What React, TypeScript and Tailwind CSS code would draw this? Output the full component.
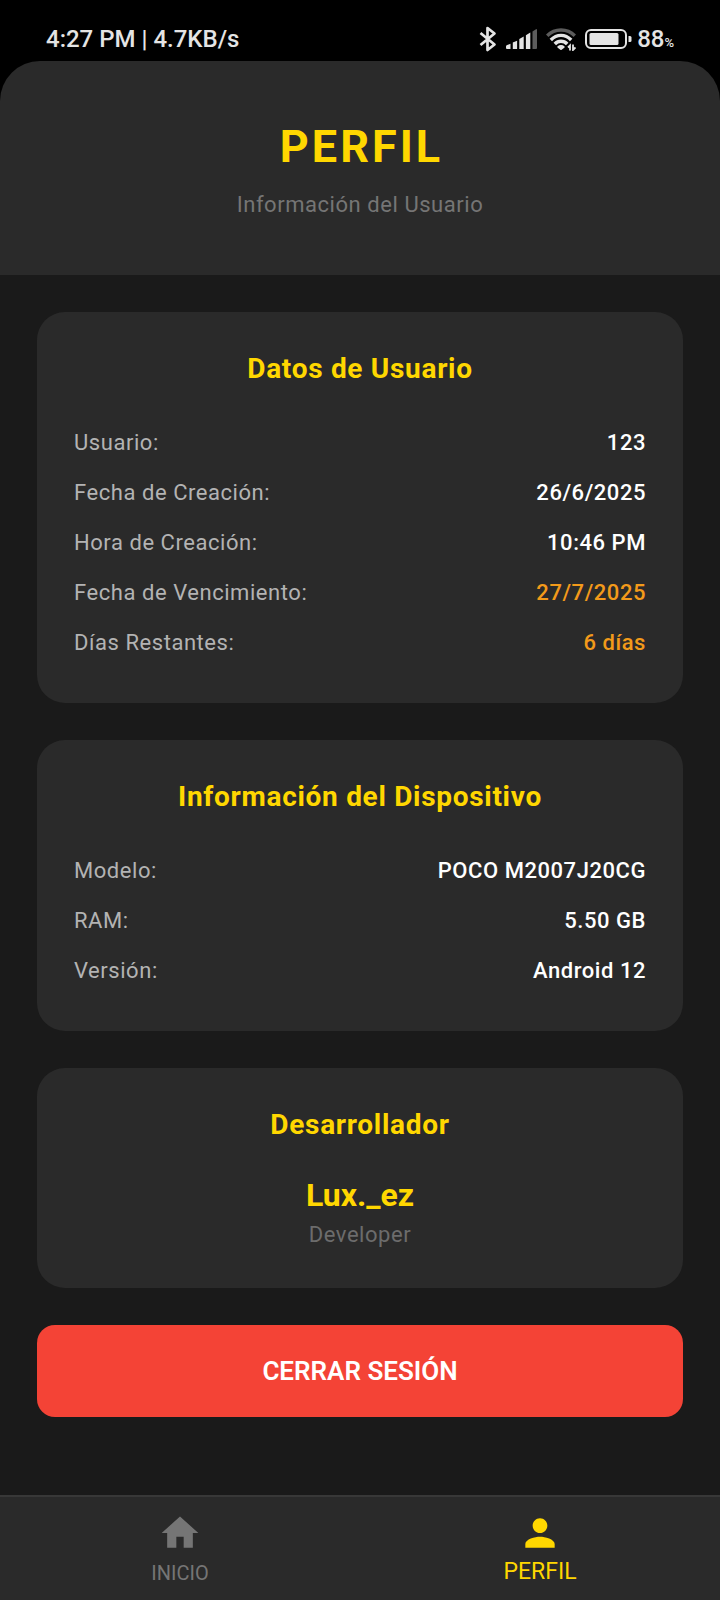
import type { ReactNode } from "react";

type Row = { label: string; value: string; warn?: boolean };

const userRows: Row[] = [
  { label: "Usuario:", value: "123" },
  { label: "Fecha de Creación:", value: "26/6/2025" },
  { label: "Hora de Creación:", value: "10:46 PM" },
  { label: "Fecha de Vencimiento:", value: "27/7/2025", warn: true },
  { label: "Días Restantes:", value: "6 días", warn: true },
];

const deviceRows: Row[] = [
  { label: "Modelo:", value: "POCO M2007J20CG" },
  { label: "RAM:", value: "5.50 GB" },
  { label: "Versión:", value: "Android 12" },
];

function StatusBar() {
  return (
    <div className="flex h-[61px] items-center justify-between bg-black pt-[17px] pr-[46px] pl-[46px] text-[24px] leading-[28px] font-medium text-[#e4e4e4]">
      <span>4:27 PM | 4.7KB/s</span>
      <div className="flex items-center gap-[9px]">
        <svg className="h-[26px] w-[18px]" viewBox="0 0 18 26" fill="none" stroke="#e4e4e4" strokeWidth="2.7" aria-hidden="true">
          <path d="M1.500 7 15.500 18.500 8.500 24V2l7 5.500L1.500 19" strokeLinejoin="round" />
        </svg>
        <svg className="h-[22px] w-[31px]" viewBox="0 0 31 22" fill="#e4e4e4" aria-hidden="true">
          <path d="M0 18.500q0-1.200 1.200-1.500l3.300-1.200V21H1q-1 0-1-1z" />
          <path d="M6.800 14.500l4.300-1.800V21H6.800z" />
          <path d="M13.300 11l4.400-2.600V21h-4.400z" />
          <path d="M19.900 7.200l4.400-2.600V21h-4.400z" />
          <path d="M26.500 3.500L30 1.200q1-.4 1 .8V20q0 1-1 1h-3.500z" fill="#5c5c5c" />
        </svg>
        <svg className="h-[24px] w-[30px]" viewBox="0 0 30 24" fill="none" strokeWidth="3.4" aria-hidden="true">
          <path d="M1.200 8.700C8.800 1 21.200 1 28.800 8.700" stroke="#5c5c5c" />
          <path d="M4.800 13C10.800 6.800 19.200 6.800 25.200 13" stroke="#e4e4e4" />
          <path d="M8.800 17C12.300 13.300 17.700 13.300 21.200 17" stroke="#e4e4e4" />
          <path d="M12.300 19.900C13.700 18.700 16.300 18.700 17.700 19.900L15 22z" fill="#e4e4e4" stroke="#e4e4e4" strokeWidth="2" strokeLinejoin="round" />
          <path d="M24 23.500V18.500L22 20.500M27 17.500V23L29.500 20.500" stroke="#e4e4e4" strokeWidth="1.800" />
        </svg>
        <div className="flex items-center gap-[5px]">
          <svg className="h-[20px] w-[47px]" viewBox="0 0 47 20" aria-hidden="true">
            <rect x="1" y="1" width="40" height="18" rx="5" fill="none" stroke="#e4e4e4" strokeWidth="2" />
            <rect x="4.500" y="4" width="29" height="12" rx="1.500" fill="#e4e4e4" />
            <path d="M43.500 7h1.500q1.500 0 1.500 1.500v3q0 1.500-1.500 1.500h-1.500z" fill="#e4e4e4" />
          </svg>
          <span>
            88<span className="text-[13px] leading-none">%</span>
          </span>
        </div>
      </div>
    </div>
  );
}

function Card({ title, children }: { title: string; children: ReactNode }) {
  return (
    <section className="rounded-[28px] bg-[#2a2a2a] px-[37px] pt-[38px] pb-[35px]">
      <h2 className="mb-[30px] text-center text-[28px] leading-[38px] font-bold tracking-wide text-[#ffd700]">{title}</h2>
      {children}
    </section>
  );
}

function Rows({ rows }: { rows: Row[] }) {
  return (
    <dl>
      {rows.map((row) => (
        <div key={row.label} className="flex h-[50px] items-center justify-between text-[22px] leading-[26px] tracking-wide">
          <dt className="text-[#b3b3b3]">{row.label}</dt>
          <dd className={row.warn ? "font-medium text-[#f39a1a]" : "font-medium text-white"}>{row.value}</dd>
        </div>
      ))}
    </dl>
  );
}

export default function App() {
  return (
    <div className="flex min-h-screen flex-col bg-[#1a1a1a] font-[Roboto,sans-serif]">
      <StatusBar />
      <div className="bg-black">
        <header className="rounded-t-[40px] bg-[#2a2a2a] pt-[58px] pb-[56px] text-center">
          <h1 className="pl-[3px] text-[45px] leading-[56px] font-bold tracking-[3px] text-[#ffd700]">PERFIL</h1>
          <p className="mt-4 text-[22px] leading-[28px] tracking-wide text-[#757575]">Información del Usuario</p>
        </header>
      </div>
      <main className="flex flex-1 flex-col gap-[37px] px-[37px] pt-[37px] pb-9">
        <Card title="Datos de Usuario">
          <Rows rows={userRows} />
        </Card>
        <Card title="Información del Dispositivo">
          <Rows rows={deviceRows} />
        </Card>
        <Card title="Desarrollador">
          <p className="text-center text-[32px] leading-[43px] font-bold text-[#ffd700]">Lux._ez</p>
          <p className="text-center text-[22px] leading-[36px] tracking-wide text-[#6c6c6c]">Developer</p>
        </Card>
        <button type="button" className="h-[92px] rounded-[18px] bg-[#f44336] text-[26px] leading-[32px] font-semibold text-white">
          CERRAR SESIÓN
        </button>
      </main>
      <nav className="grid h-[105px] grid-cols-2 border-t-2 border-[#383838] bg-[#2a2a2a] pt-[14px]">
        <a href="#inicio" className="flex flex-col items-center text-[20px] leading-[36px] text-[#757575]">
          <svg className="h-[44px] w-[44px]" viewBox="0 0 24 24" fill="currentColor" aria-hidden="true">
            <path d="M10 20v-6h4v6h5v-8h3L12 3 2 12h3v8z" />
          </svg>
          INICIO
        </a>
        <a href="#perfil" aria-current="page" className="flex flex-col items-center text-[23px] leading-[34px] text-[#ffd700]">
          <svg className="h-[44px] w-[44px]" viewBox="0 0 24 24" fill="currentColor" aria-hidden="true">
            <path d="M12 12c2.210 0 4-1.790 4-4s-1.790-4-4-4-4 1.790-4 4 1.790 4 4 4zm0 2c-2.670 0-8 1.340-8 4v2h16v-2c0-2.660-5.330-4-8-4z" />
          </svg>
          PERFIL
        </a>
      </nav>
    </div>
  );
}
